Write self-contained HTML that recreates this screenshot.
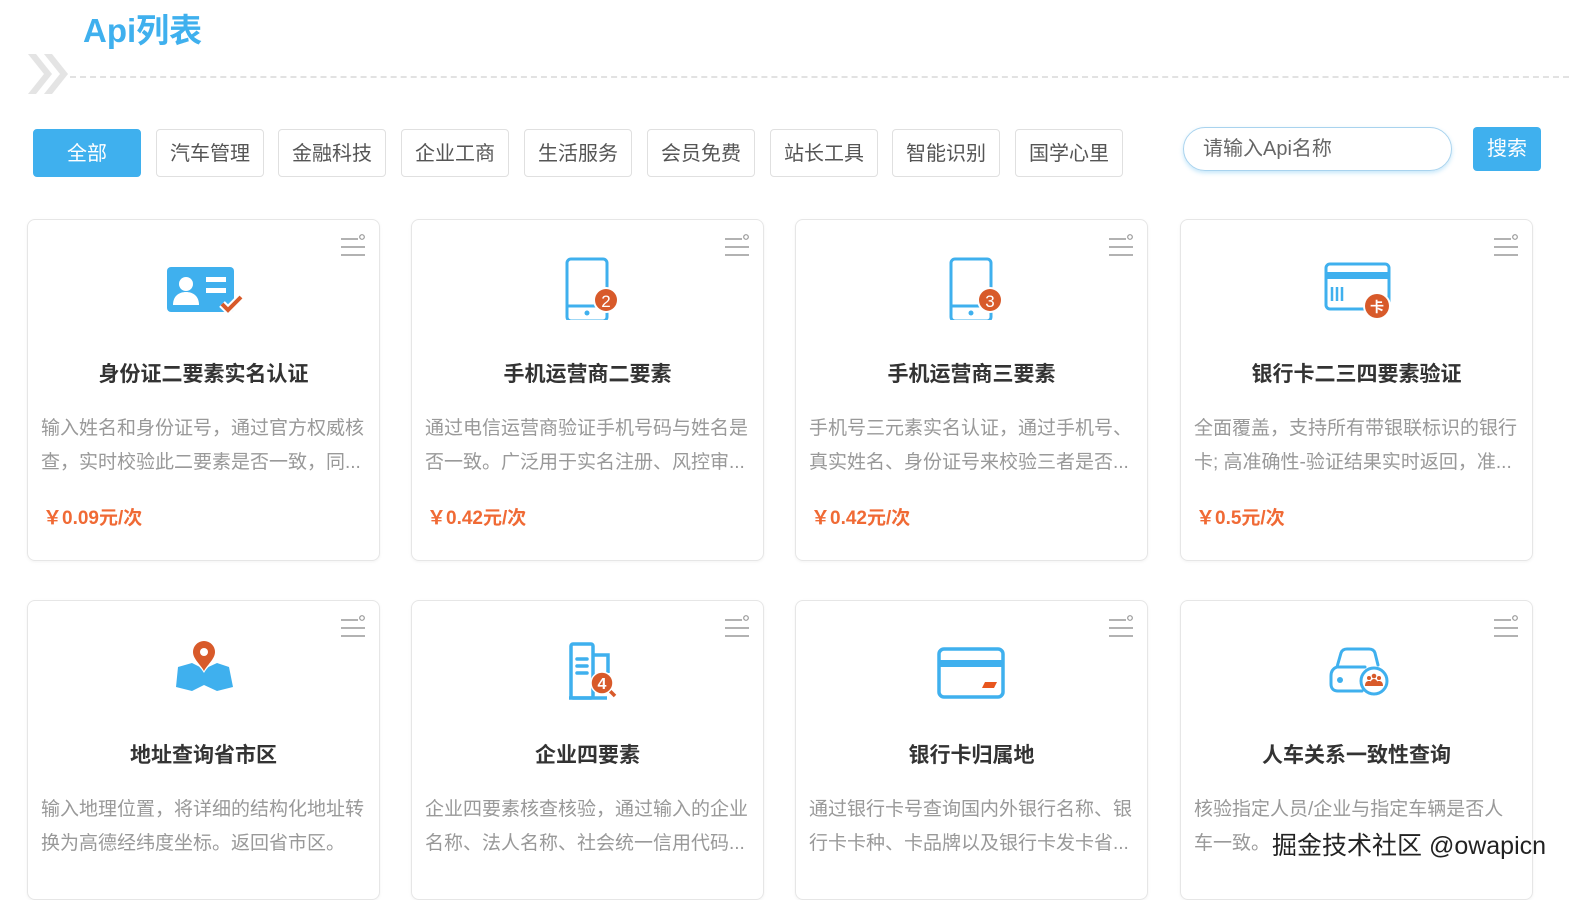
<!DOCTYPE html>
<html><head><meta charset="utf-8"><style>
*{margin:0;padding:0;box-sizing:border-box}
body{width:1569px;height:882px;overflow:hidden;background:#fff;font-family:"Liberation Sans","Noto Sans CJK SC",sans-serif;position:relative}
.title{position:absolute;left:83px;top:4px;font-size:33px;font-weight:bold;color:#3fb0ee}
.dash{position:absolute;left:70px;top:76px;width:1499px;border-top:2px dashed #e2e2e2}
.tab{position:absolute;top:129px;height:48px;width:108px;border:1px solid #e0e0e0;border-radius:4px;font-size:20px;color:#555;text-align:center;line-height:49px}
.tab.on{background:#3fb0ee;color:#fff;border-color:#3fb0ee}
.search{position:absolute;left:1183px;top:127px;width:269px;height:44px;border:1px solid #a9d3ee;border-radius:22px;box-shadow:0 2px 4px rgba(63,176,238,.3);font-size:20px;color:#666;padding-left:19px;line-height:43px}
.btn{position:absolute;left:1473px;top:127px;width:68px;height:44px;background:#3fb0ee;border-radius:4px;color:#fff;font-size:20px;text-align:center;line-height:45px}
.card{position:absolute;width:353px;height:342px;border:1px solid #e6e6e6;border-radius:8px;box-shadow:0 1px 3px rgba(0,0,0,.05)}
.menu{position:absolute;right:14px;top:13px}
.icon{position:absolute;left:126px;top:30px;width:100px;height:70px}
.ct{position:absolute;top:138px;left:0;right:0;text-align:center;font-size:21px;font-weight:bold;color:#333}
.cd{position:absolute;top:192px;left:13px;right:13px;font-size:19px;line-height:34px;color:#999;height:68px;overflow:hidden}
.pr{position:absolute;top:283px;left:15px;font-size:19px;font-weight:bold;color:#f06a35}
.wm{position:absolute;left:1272px;top:826px;font-size:25px;color:#222;text-shadow:1px 1px 0 #fff,-1px -1px 0 #fff}
</style></head><body>
<div class="title">Api列表</div>
<svg style="position:absolute;left:24px;top:50px" width="50" height="50"><path d="M4 4 L20 24 L4 44 L12 44 L28 24 L12 4Z M20 4 L36 24 L20 44 L28 44 L44 24 L28 4Z" fill="#e4e4e4"/></svg>
<div class="dash"></div>
<div class="tab on" style="left:33px">全部</div>
<div class="tab" style="left:156px">汽车管理</div>
<div class="tab" style="left:278px">金融科技</div>
<div class="tab" style="left:401px">企业工商</div>
<div class="tab" style="left:524px">生活服务</div>
<div class="tab" style="left:647px">会员免费</div>
<div class="tab" style="left:770px">站长工具</div>
<div class="tab" style="left:892px">智能识别</div>
<div class="tab" style="left:1015px">国学心里</div>
<div class="search">请输入Api名称</div>
<div class="btn">搜索</div>

<!-- row 1 -->
<div class="card" style="left:27px;top:219px">
<svg class="menu" width="24" height="26"><path d="M0 6h17M0 14h24M0 22h24" stroke="#999" stroke-width="1.5"/><circle cx="21" cy="4" r="2.3" fill="none" stroke="#999" stroke-width="1.2"/></svg>
<svg class="icon" viewBox="0 0 100 70"><rect x="13" y="17" width="67" height="45" rx="4" fill="#3fb0ee"/><circle cx="32" cy="34" r="7" fill="#fff"/><path d="M19 55c0-9 6-13 13-13s13 4 13 13z" fill="#fff"/><rect x="52" y="27" width="20" height="5" fill="#fff"/><rect x="52" y="38" width="20" height="5" fill="#fff"/><path d="M68 54l6 6 13-13" stroke="#fff" stroke-width="8" fill="none"/><path d="M68 54l6 6 13-13" stroke="#d85a2a" stroke-width="4" fill="none"/></svg>
<div class="ct">身份证二要素实名认证</div>
<div class="cd">输入姓名和身份证号，通过官方权威核查，实时校验此二要素是否一致，同...</div>
<div class="pr">￥0.09元/次</div></div>

<div class="card" style="left:411px;top:219px">
<svg class="menu" width="24" height="26"><path d="M0 6h17M0 14h24M0 22h24" stroke="#999" stroke-width="1.5"/><circle cx="21" cy="4" r="2.3" fill="none" stroke="#999" stroke-width="1.2"/></svg>
<svg class="icon" viewBox="0 0 100 70"><rect x="29" y="9" width="40" height="62" rx="4" fill="none" stroke="#3fb0ee" stroke-width="3"/><path d="M29 56h40" stroke="#3fb0ee" stroke-width="3"/><circle cx="49" cy="63" r="2.5" fill="#3fb0ee"/><circle cx="68" cy="50" r="13" fill="#fff"/><circle cx="68" cy="50" r="11" fill="#d85a2a"/><text x="68" y="57" font-size="17" fill="#fff" text-anchor="middle" font-family="Liberation Sans">2</text></svg>
<div class="ct">手机运营商二要素</div>
<div class="cd">通过电信运营商验证手机号码与姓名是否一致。广泛用于实名注册、风控审...</div>
<div class="pr">￥0.42元/次</div></div>

<div class="card" style="left:795px;top:219px">
<svg class="menu" width="24" height="26"><path d="M0 6h17M0 14h24M0 22h24" stroke="#999" stroke-width="1.5"/><circle cx="21" cy="4" r="2.3" fill="none" stroke="#999" stroke-width="1.2"/></svg>
<svg class="icon" viewBox="0 0 100 70"><rect x="29" y="9" width="40" height="62" rx="4" fill="none" stroke="#3fb0ee" stroke-width="3"/><path d="M29 56h40" stroke="#3fb0ee" stroke-width="3"/><circle cx="49" cy="63" r="2.5" fill="#3fb0ee"/><circle cx="68" cy="50" r="13" fill="#fff"/><circle cx="68" cy="50" r="11" fill="#d85a2a"/><text x="68" y="57" font-size="17" fill="#fff" text-anchor="middle" font-family="Liberation Sans">3</text></svg>
<div class="ct">手机运营商三要素</div>
<div class="cd">手机号三元素实名认证，通过手机号、真实姓名、身份证号来校验三者是否...</div>
<div class="pr">￥0.42元/次</div></div>

<div class="card" style="left:1180px;top:219px">
<svg class="menu" width="24" height="26"><path d="M0 6h17M0 14h24M0 22h24" stroke="#999" stroke-width="1.5"/><circle cx="21" cy="4" r="2.3" fill="none" stroke="#999" stroke-width="1.2"/></svg>
<svg class="icon" viewBox="0 0 100 70"><rect x="19" y="14" width="63" height="45" rx="4" fill="none" stroke="#3fb0ee" stroke-width="3"/><rect x="19" y="22" width="63" height="7" fill="#3fb0ee"/><path d="M25 37v14M30 37v14M35 37v14" stroke="#3fb0ee" stroke-width="2.5"/><circle cx="70" cy="56" r="14" fill="#fff"/><circle cx="70" cy="56" r="12" fill="#d85a2a"/><text x="70" y="62" font-size="14" fill="#fff" font-weight="bold" text-anchor="middle" font-family="Noto Sans CJK SC">卡</text></svg>
<div class="ct">银行卡二三四要素验证</div>
<div class="cd">全面覆盖，支持所有带银联标识的银行卡; 高准确性-验证结果实时返回，准...</div>
<div class="pr">￥0.5元/次</div></div>

<!-- row 2 -->
<div class="card" style="left:27px;top:600px;height:300px">
<svg class="menu" width="24" height="26"><path d="M0 6h17M0 14h24M0 22h24" stroke="#999" stroke-width="1.5"/><circle cx="21" cy="4" r="2.3" fill="none" stroke="#999" stroke-width="1.2"/></svg>
<svg class="icon" viewBox="0 0 100 70"><path d="M24 36l14-4 12 6 13-6 12 4 4 20-16 4-13-6-12 6-16-4z" fill="#3fb0ee"/><path d="M50 42c-3-6-13-13-13-21a13 13 0 0 1 26 0c0 8-10 15-13 21z" fill="#fff"/><path d="M50 40c-3-6-11-12-11-19a11 11 0 0 1 22 0c0 7-8 13-11 19z" fill="#d85a2a"/><circle cx="50" cy="21" r="4" fill="#fff"/></svg>
<div class="ct">地址查询省市区</div>
<div class="cd">输入地理位置，将详细的结构化地址转换为高德经纬度坐标。返回省市区。</div></div>

<div class="card" style="left:411px;top:600px;height:300px">
<svg class="menu" width="24" height="26"><path d="M0 6h17M0 14h24M0 22h24" stroke="#999" stroke-width="1.5"/><circle cx="21" cy="4" r="2.3" fill="none" stroke="#999" stroke-width="1.2"/></svg>
<svg class="icon" viewBox="0 0 100 70"><rect x="33" y="13" width="22" height="54" rx="2" fill="none" stroke="#3fb0ee" stroke-width="3.5"/><path d="M55 24h15v18M31 67h38" stroke="#3fb0ee" stroke-width="3.5" fill="none"/><path d="M39 28h10M39 35h10M39 42h10" stroke="#3fb0ee" stroke-width="3.5" stroke-linecap="round"/><path d="M70 58l7 7" stroke="#d85a2a" stroke-width="3.5"/><circle cx="64" cy="52" r="11" fill="#d85a2a" stroke="#fff" stroke-width="1.5"/><text x="64" y="58" font-size="16" fill="#fff" font-weight="bold" text-anchor="middle" font-family="Liberation Sans">4</text></svg>
<div class="ct">企业四要素</div>
<div class="cd">企业四要素核查核验，通过输入的企业名称、法人名称、社会统一信用代码...</div></div>

<div class="card" style="left:795px;top:600px;height:300px">
<svg class="menu" width="24" height="26"><path d="M0 6h17M0 14h24M0 22h24" stroke="#999" stroke-width="1.5"/><circle cx="21" cy="4" r="2.3" fill="none" stroke="#999" stroke-width="1.2"/></svg>
<svg class="icon" viewBox="0 0 100 70"><rect x="17" y="18" width="64" height="48" rx="5" fill="none" stroke="#3fb0ee" stroke-width="3.5"/><rect x="17" y="29" width="64" height="7" fill="#3fb0ee"/><path d="M63 51h12l-3 6H60z" fill="#e8561e"/></svg>
<div class="ct">银行卡归属地</div>
<div class="cd">通过银行卡号查询国内外银行名称、银行卡卡种、卡品牌以及银行卡发卡省...</div></div>

<div class="card" style="left:1180px;top:600px;height:300px">
<svg class="menu" width="24" height="26"><path d="M0 6h17M0 14h24M0 22h24" stroke="#999" stroke-width="1.5"/><circle cx="21" cy="4" r="2.3" fill="none" stroke="#999" stroke-width="1.2"/></svg>
<svg class="icon" viewBox="0 0 100 70"><path d="M24 45c0-6 3-8 6-9l4-14c1-3 3-4 6-4h22c3 0 5 1 6 4l3 12M24 45v8c0 5 3 7 7 7h24M30 36h28" stroke="#3fb0ee" stroke-width="3" fill="none" stroke-linecap="round"/><circle cx="33" cy="49" r="3" fill="#3fb0ee"/><circle cx="67" cy="50" r="13" fill="#fff" stroke="#3fb0ee" stroke-width="3"/><g fill="#d85a2a"><circle cx="62" cy="47" r="2"/><circle cx="67" cy="45" r="2.3"/><circle cx="72" cy="47" r="2"/><path d="M58 55c0-4 2-5 4-5s4 1 4 5zM63 55c0-5 2-7 4-7s4 2 4 7zM68 55c0-4 2-5 4-5s4 1 4 5z"/></g></svg>
<div class="ct">人车关系一致性查询</div>
<div class="cd">核验指定人员/企业与指定车辆是否人车一致。</div></div>

<div class="wm">掘金技术社区 @owapicn</div>
</body></html>
